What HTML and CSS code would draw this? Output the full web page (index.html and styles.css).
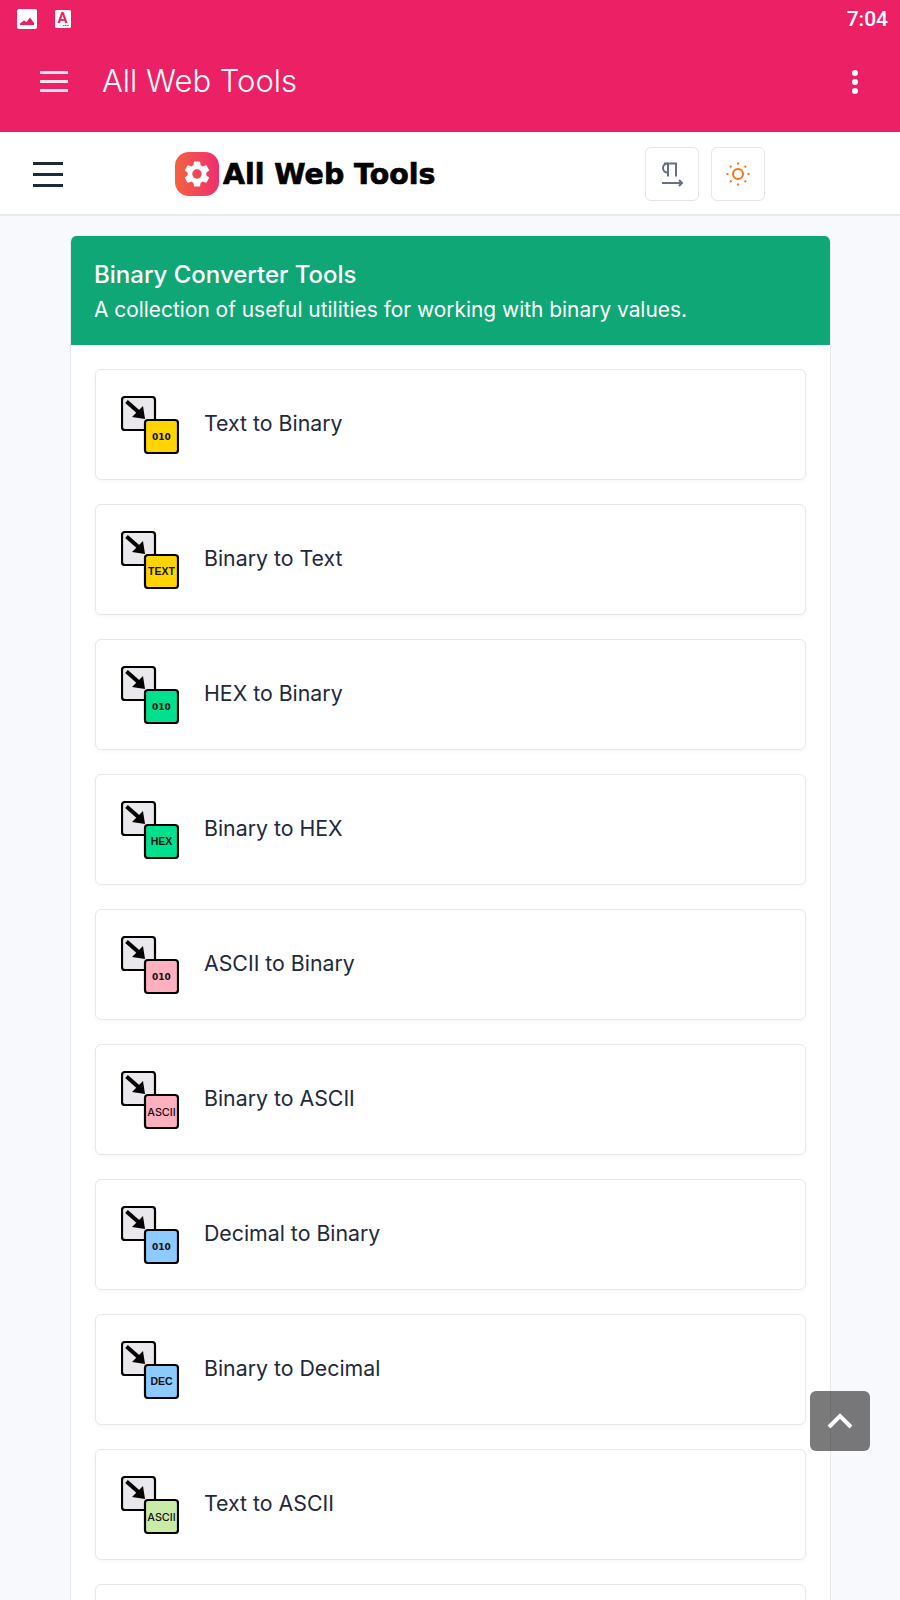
FILE: index.html
```html
<!DOCTYPE html>
<html lang="en">
  <head>
    <meta charset="UTF-8" />
    <meta name="viewport" content="width=device-width, initial-scale=1.0" />
    <title>All Web Tools</title>
    <link rel="stylesheet" href="styles.css">
  </head>
  <body>
    <svg class="defs" width="0" height="0">
      <symbol id="convert-base" viewBox="0 0 58 58">
        <rect x="1" y="1" width="33" height="33" rx="3" fill="#eae8ec" stroke="#000" stroke-width="2.2" />
        <path d="M5.5 5.5 L18 16.5" stroke="#000" stroke-width="4" fill="none" />
        <path d="M24 23 L11 21 L22 10 Z" fill="#000" />
      </symbol>
    </svg>

    <header class="app-bar">
      <div class="status-bar">
        <svg class="status-icon" width="20" height="20" viewBox="0 0 20 20">
          <rect width="20" height="20" rx="2" fill="#fff" />
          <path d="M3 16 L3 14.5 L7 11.5 L9.5 13 L13 8.5 L17 14 L17 16 Z" fill="#ec2064" />
        </svg>
        <svg class="status-icon status-a" width="16" height="18" viewBox="0 0 16 18">
          <rect width="16" height="18" rx="1.5" fill="#fff" />
          <text x="7.5" y="12.5" class="status-a-text">A</text>
          <path d="M8 15.5 H14" stroke="#ec2064" stroke-width="1.2" stroke-dasharray="1.2 .6" />
        </svg>
        <span class="status-time">7:04</span>
      </div>
      <div class="toolbar">
        <div class="toolbar-menu"><span></span><span></span><span></span></div>
        <div class="toolbar-title">All Web Tools</div>
        <div class="toolbar-more"><span></span><span></span><span></span></div>
      </div>
    </header>

    <nav class="site-nav">
      <div class="nav-burger"><span></span><span></span><span></span></div>
      <a class="logo" href="#">
        <svg width="44" height="44" viewBox="0 0 44 44">
          <defs>
            <linearGradient id="logo-grad" x1="0" y1="0" x2="1" y2="0">
              <stop offset="0" stop-color="#f4633f" />
              <stop offset="1" stop-color="#ee2e70" />
            </linearGradient>
          </defs>
          <rect width="44" height="44" rx="14" fill="url(#logo-grad)" />
          <g transform="translate(6.4 6.4) scale(1.3)">
            <path fill="#fff" d="M19.14 12.94c.04-.3.06-.61.06-.94 0-.32-.02-.64-.07-.94l2.03-1.58c.18-.14.23-.41.12-.61l-1.92-3.32c-.12-.22-.37-.29-.59-.22l-2.39.96c-.5-.38-1.03-.7-1.62-.94l-.36-2.54c-.04-.24-.24-.41-.48-.41h-3.84c-.24 0-.43.17-.47.41l-.36 2.54c-.59.24-1.13.57-1.62.94l-2.39-.96c-.22-.08-.47 0-.59.22L2.74 8.87c-.12.21-.08.47.12.61l2.03 1.58c-.05.3-.09.63-.09.94s.02.64.07.94l-2.03 1.58c-.18.14-.23.41-.12.61l1.92 3.32c.12.22.37.29.59.22l2.39-.96c.5.38 1.03.7 1.62.94l.36 2.54c.05.24.24.41.48.41h3.84c.24 0 .44-.17.47-.41l.36-2.54c.59-.24 1.13-.56 1.62-.94l2.39.96c.22.08.47 0 .59-.22l1.92-3.32c.12-.22.07-.47-.12-.61l-2.01-1.58zM12 15.6c-1.98 0-3.6-1.62-3.6-3.6s1.62-3.6 3.6-3.6 3.6 1.62 3.6 3.6-1.62 3.6-3.6 3.6z" />
          </g>
        </svg>
        <span class="logo-text">All Web Tools</span>
      </a>
      <div class="nav-actions">
        <button class="icon-btn">
          <svg width="24" height="26" viewBox="0 0 24 26" fill="none" stroke="#667085" stroke-width="2">
            <path d="M8 2.5 H7.5 a4.5 4.5 0 0 0 0 9 H8" />
            <path d="M4 2.5 H17 M8 2.5 V15.5 M16 2.5 V15.5" />
            <path d="M2 22 H22 M19 19 L22 22 L19 25" />
          </svg>
        </button>
        <button class="icon-btn">
          <svg width="24" height="24" viewBox="0 0 24 24" fill="none" stroke="#f97316" stroke-width="2">
            <circle cx="12" cy="12" r="5" />
            <path d="M12 0.5 V2.5 M12 21.5 V23.5 M0.5 12 H2.5 M21.5 12 H23.5 M4 4 L5.4 5.4 M18.6 18.6 L20 20 M4 20 L5.4 18.6 M18.6 5.4 L20 4" />
          </svg>
        </button>
      </div>
    </nav>

    <main class="container">
      <section class="card">
        <div class="card-head">
          <h1>Binary Converter Tools</h1>
          <p>A collection of useful utilities for working with binary values.</p>
        </div>
        <div class="card-body">
          <a class="tool" href="#">
            <svg class="tool-icon" width="58" height="58" viewBox="0 0 58 58">
              <use href="#convert-base" width="58" height="58" />
              <rect x="24" y="24" width="33" height="33" rx="3" fill="#ffd400" stroke="#000" stroke-width="2.2" />
              <text x="40.5" y="44" class="badge">010</text>
            </svg>
            <span>Text to Binary</span>
          </a>
          <a class="tool" href="#">
            <svg class="tool-icon" width="58" height="58" viewBox="0 0 58 58">
              <use href="#convert-base" width="58" height="58" />
              <rect x="24" y="24" width="33" height="33" rx="3" fill="#ffd400" stroke="#000" stroke-width="2.2" />
              <text x="40.5" y="44" class="badge badge-word">TEXT</text>
            </svg>
            <span>Binary to Text</span>
          </a>
          <a class="tool" href="#">
            <svg class="tool-icon" width="58" height="58" viewBox="0 0 58 58">
              <use href="#convert-base" width="58" height="58" />
              <rect x="24" y="24" width="33" height="33" rx="3" fill="#00e08f" stroke="#000" stroke-width="2.2" />
              <text x="40.5" y="44" class="badge">010</text>
            </svg>
            <span>HEX to Binary</span>
          </a>
          <a class="tool" href="#">
            <svg class="tool-icon" width="58" height="58" viewBox="0 0 58 58">
              <use href="#convert-base" width="58" height="58" />
              <rect x="24" y="24" width="33" height="33" rx="3" fill="#00e08f" stroke="#000" stroke-width="2.2" />
              <text x="40.5" y="44" class="badge badge-word">HEX</text>
            </svg>
            <span>Binary to HEX</span>
          </a>
          <a class="tool" href="#">
            <svg class="tool-icon" width="58" height="58" viewBox="0 0 58 58">
              <use href="#convert-base" width="58" height="58" />
              <rect x="24" y="24" width="33" height="33" rx="3" fill="#ffb0c0" stroke="#000" stroke-width="2.2" />
              <text x="40.5" y="44" class="badge">010</text>
            </svg>
            <span>ASCII to Binary</span>
          </a>
          <a class="tool" href="#">
            <svg class="tool-icon" width="58" height="58" viewBox="0 0 58 58">
              <use href="#convert-base" width="58" height="58" />
              <rect x="24" y="24" width="33" height="33" rx="3" fill="#ffb0c0" stroke="#000" stroke-width="2.2" />
              <text x="40.5" y="44.5" class="badge badge-ascii">ASCII</text>
            </svg>
            <span>Binary to ASCII</span>
          </a>
          <a class="tool" href="#">
            <svg class="tool-icon" width="58" height="58" viewBox="0 0 58 58">
              <use href="#convert-base" width="58" height="58" />
              <rect x="24" y="24" width="33" height="33" rx="3" fill="#8ccaff" stroke="#000" stroke-width="2.2" />
              <text x="40.5" y="44" class="badge">010</text>
            </svg>
            <span>Decimal to Binary</span>
          </a>
          <a class="tool" href="#">
            <svg class="tool-icon" width="58" height="58" viewBox="0 0 58 58">
              <use href="#convert-base" width="58" height="58" />
              <rect x="24" y="24" width="33" height="33" rx="3" fill="#8ccaff" stroke="#000" stroke-width="2.2" />
              <text x="40.5" y="44" class="badge badge-word">DEC</text>
            </svg>
            <span>Binary to Decimal</span>
          </a>
          <a class="tool" href="#">
            <svg class="tool-icon" width="58" height="58" viewBox="0 0 58 58">
              <use href="#convert-base" width="58" height="58" />
              <rect x="24" y="24" width="33" height="33" rx="3" fill="#c9eba8" stroke="#000" stroke-width="2.2" />
              <text x="40.5" y="44.5" class="badge badge-ascii">ASCII</text>
            </svg>
            <span>Text to ASCII</span>
          </a>
          <a class="tool" href="#"></a>
        </div>
      </section>
    </main>

    <button class="to-top">
      <svg width="26" height="18" viewBox="0 0 26 18" fill="none" stroke="#fff" stroke-width="4">
        <path d="M2 15 L13 4 L24 15" />
      </svg>
    </button>
  </body>
</html>
```

FILE: styles.css
```css
* {
  box-sizing: border-box;
  margin: 0;
  padding: 0;
}
html,
body {
  height: 1600px;
  overflow: hidden;
}
body {
  font-family: "Inter", sans-serif;
  background: #f8f9fc;
  color: #1e293b;
}
a {
  color: inherit;
  text-decoration: none;
}
.defs {
  position: absolute;
}

/* pink app bar */
.app-bar {
  height: 132px;
  background: #ec2064;
  color: #fff;
}
.status-bar {
  display: flex;
  align-items: center;
  height: 37px;
  padding: 0 12px 0 17px;
}
.status-a {
  margin-left: 18px;
}
.status-a-text {
  font-family: "Roboto", sans-serif;
  font-size: 15px;
  font-weight: 700;
  fill: #ec2064;
  text-anchor: middle;
}
.status-time {
  margin-left: auto;
  font-family: "Roboto", sans-serif;
  font-size: 21px;
  font-weight: 500;
}
.toolbar {
  display: flex;
  align-items: center;
  height: 86px;
  padding: 0 40px;
}
.toolbar-menu {
  display: flex;
  flex-direction: column;
  gap: 6px;
  width: 28px;
  margin-top: 3px;
}
.toolbar-menu span {
  height: 3px;
  background: #fde3ec;
}
.toolbar-title {
  margin-left: 34px;
  font-family: "Inter", sans-serif;
  font-size: 31px;
  font-weight: 300;
}
.toolbar-more {
  display: flex;
  flex-direction: column;
  gap: 3px;
  margin-left: auto;
  margin-right: 2px;
  margin-top: 3px;
}
.toolbar-more span {
  width: 6px;
  height: 6px;
  border-radius: 50%;
  background: #fff;
}

/* site nav */
.site-nav {
  display: flex;
  align-items: center;
  height: 84px;
  padding: 2px 33px 0;
  background: #fff;
  border-bottom: 2px solid #e8ebf0;
}
.nav-burger {
  display: flex;
  flex-direction: column;
  gap: 8px;
  width: 30px;
}
.nav-burger span {
  height: 3px;
  background: #1e293b;
}
.logo {
  display: flex;
  align-items: center;
  gap: 4px;
  margin-left: 112px;
}
.logo-text {
  font-family: "DejaVu Sans", sans-serif;
  font-size: 28.4px;
  font-weight: 700;
  color: #000;
  -webkit-text-stroke: 0.7px #000;
}
.nav-actions {
  display: flex;
  gap: 12px;
  margin-left: auto;
  margin-right: 102px;
}
.icon-btn {
  display: flex;
  align-items: center;
  justify-content: center;
  width: 54px;
  height: 54px;
  background: #fff;
  border: 1px solid #e5e7eb;
  border-radius: 6px;
}

/* tool card */
.container {
  padding: 20px 69px 20px 70px;
}
.card {
  background: #fff;
  border: 1px solid #e5e7eb;
  border-top: none;
  border-radius: 6px;
  overflow: hidden;
}
.card-head {
  height: 109px;
  padding: 23px 23px 0;
  background: #0fa776;
  color: #fff;
}
.card-head h1 {
  font-size: 24px;
  font-weight: 500;
  line-height: 32px;
}
.card-head p {
  margin-top: 3px;
  font-size: 20.9px;
  line-height: 32px;
}
.card-body {
  display: flex;
  flex-direction: column;
  gap: 24px;
  padding: 24px;
}
.tool {
  display: flex;
  align-items: center;
  gap: 25px;
  height: 111px;
  flex: none;
  padding: 0 25px;
  font-size: 21.3px;
  border: 1px solid #e5e7eb;
  border-radius: 6px;
  box-shadow: 0 2px 4px rgba(0, 0, 0, 0.03);
}
.tool span {
  margin-bottom: 4px;
}
.tool-icon {
  margin-top: 1px;
}
.badge {
  font-family: "DejaVu Sans", sans-serif;
  font-size: 9px;
  font-weight: 700;
  text-anchor: middle;
  fill: #111;
}
.badge-word {
  font-family: "Liberation Sans", sans-serif;
  font-size: 10.5px;
}
.badge-ascii {
  font-family: "Inter", sans-serif;
  font-size: 10.8px;
  font-weight: 500;
}

.to-top {
  position: fixed;
  left: 810px;
  top: 1391px;
  display: flex;
  align-items: center;
  justify-content: center;
  width: 60px;
  height: 60px;
  background: rgba(0, 0, 0, 0.52);
  border: none;
  border-radius: 6px;
}
```
